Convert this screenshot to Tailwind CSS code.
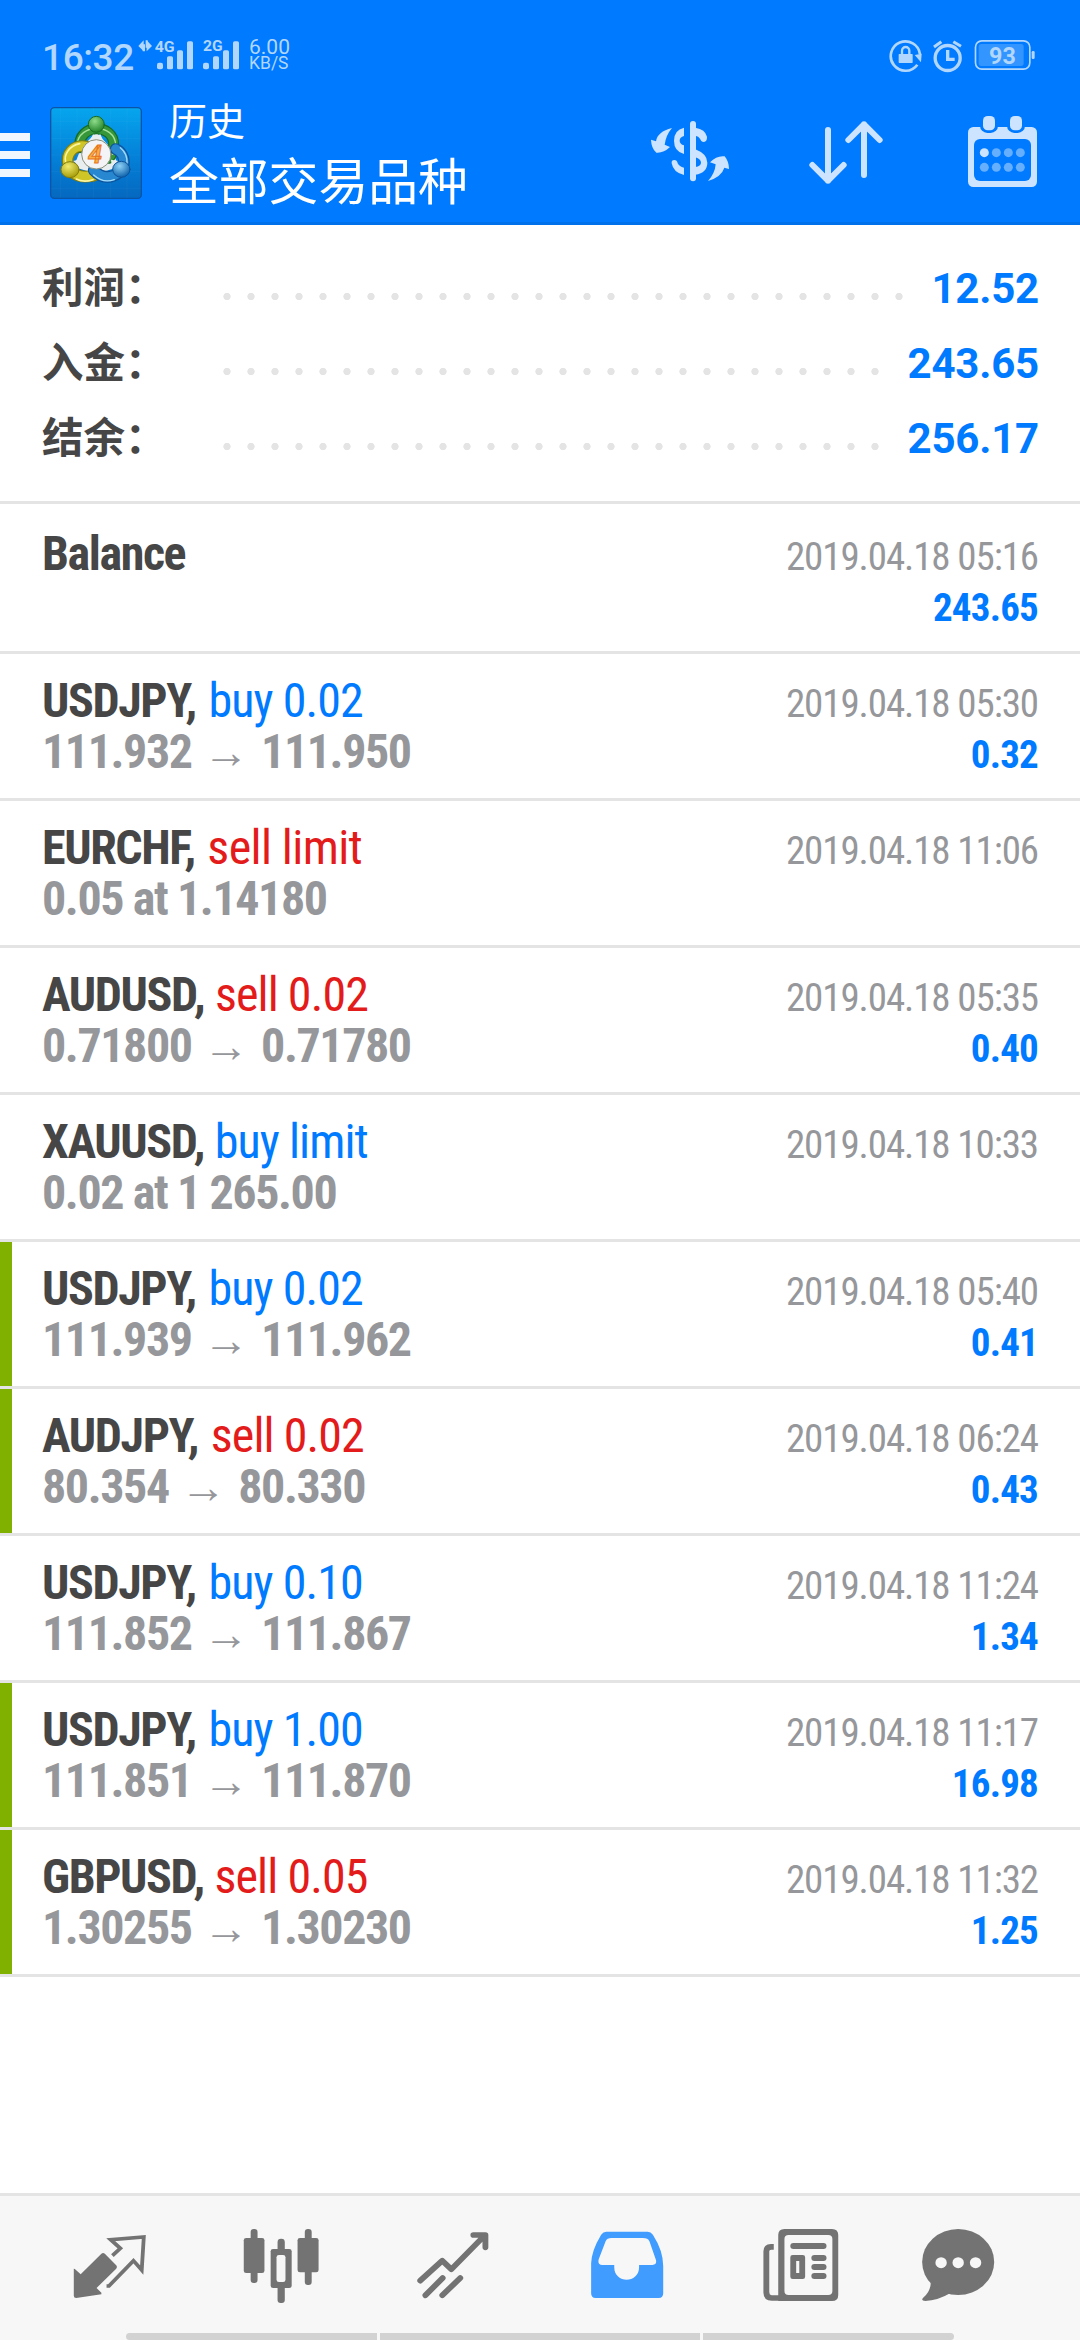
<!DOCTYPE html>
<html lang="zh-CN">
<head>
<meta charset="utf-8">
<title>历史</title>
<script src="https://cdn.jsdelivr.net/npm/@tailwindcss/browser@4"></script>
</head>
<body class="bg-white">
<div class="flex h-[2340px] w-[1080px] flex-col overflow-hidden bg-white font-['Roboto','Noto_Sans_CJK_SC',sans-serif]">

  <header class="h-[225px] shrink-0 border-b-[3px] border-[#0071eb] bg-[#007aff]">
    <!-- status bar -->
    <div class="flex h-[84px] items-start text-[#b2d7ff]">
      <span class="ml-[42px] mt-[36px] w-[96px] text-[37px] font-medium leading-[43px] tracking-[-0.4px]">16:32</span>
      <svg class="mt-[38.5px] h-8 w-[103px]" viewBox="414 56 309 96" fill="#b2d7ff">
        <path d="M431 60V93L415 77ZM440 60V93L456 77Z"/>
        <path d="M428 72h7v21h-7zM437 60h6v22h-6z"/>
        <text x="464" y="95" font-size="42" font-weight="700" textLength="60" lengthAdjust="spacingAndGlyphs">4G</text>
        <text x="609" y="93" font-size="42" font-weight="700" textLength="59" lengthAdjust="spacingAndGlyphs">2G</text>
        <rect x="471" y="127" width="18" height="20" rx="6"/><rect x="501" y="108" width="18" height="39" rx="5"/><rect x="531" y="90" width="18" height="57" rx="5"/><rect x="561" y="63" width="18" height="84" rx="5"/>
        <rect x="609" y="127" width="18" height="20" rx="6"/><rect x="639" y="108" width="18" height="39" rx="5"/><rect x="669" y="90" width="18" height="57" rx="5"/><rect x="699" y="63" width="18" height="84" rx="5"/>
      </svg>
      <div class="ml-[8px] mt-[40px] flex flex-col">
        <span class="text-[21px] leading-[15px]">6.00</span>
        <span class="text-[17.5px] leading-[16px]">KB/S</span>
      </div>
      <svg class="ml-auto mr-[44px] mt-[39px] h-[34px] w-[147px]" viewBox="808 57 441 102" fill="none" stroke="#b2d7ff">
        <path d="M893 134A44 44 0 1 1 901 103" stroke-width="8"/>
        <path d="M885 105L906 101L904 127Z" fill="#b2d7ff" stroke="none"/>
        <path d="M847 104V92a11 11 0 0 1 22 0v12" stroke-width="7"/>
        <rect x="837" y="102" width="42" height="27" rx="2" fill="#b2d7ff" stroke="none"/>
        <circle cx="984" cy="114" r="37.5" stroke-width="10"/>
        <path d="M984 90V118H1005" stroke-width="10"/>
        <path d="M943 81L965 65M1001 65L1024 79" stroke-width="9"/>
        <rect x="1067.500" y="62.500" width="163" height="85" rx="19" stroke-width="5"/>
        <rect x="1077" y="72" width="135" height="66" rx="8" fill="#3395ff" stroke="none"/>
        <rect x="1236" y="93" width="9" height="24" rx="4" fill="#b2d7ff" stroke="none"/>
        <text x="1108" y="132" font-size="70" font-weight="700" fill="#b2d7ff" stroke="none">93</text>
      </svg>
    </div>

    <!-- toolbar -->
    <div class="flex items-start">
      <div class="mt-[49px] flex w-[30px] flex-col gap-[10px]">
        <div class="h-2 bg-[#f0f7ff]"></div><div class="h-2 bg-[#f0f7ff]"></div><div class="h-2 bg-[#f0f7ff]"></div>
      </div>
      <svg class="ml-[19px] mt-[22px] h-[94px] w-[94px]" viewBox="26 33 282 282" fill="none" stroke-linecap="round">
        <defs>
          <linearGradient id="sq" x1="0" y1="0" x2="0" y2="1"><stop offset="0" stop-color="#06a6ee"/><stop offset=".55" stop-color="#0480d8"/><stop offset="1" stop-color="#0568bf"/></linearGradient>
          <radialGradient id="gh" cx=".4" cy=".3" r=".7"><stop offset="0" stop-color="#8fdc8a"/><stop offset="1" stop-color="#23842a"/></radialGradient>
          <radialGradient id="yh" cx=".4" cy=".3" r=".7"><stop offset="0" stop-color="#f2ec6e"/><stop offset="1" stop-color="#a69c0a"/></radialGradient>
          <radialGradient id="bh" cx=".4" cy=".3" r=".7"><stop offset="0" stop-color="#8fd2f7"/><stop offset="1" stop-color="#0f64ad"/></radialGradient>
        </defs>
        <rect x="31" y="38" width="272" height="272" rx="11" fill="url(#sq)" stroke="#0a54a6" stroke-width="4"/>
        <path d="M60 40V308M110 40V308M160 40V308M210 40V308M260 40V308M33 80H301M33 130H301M33 180H301M33 230H301M33 280H301" stroke="#fff" stroke-opacity=".06" stroke-width="2"/>
        <path d="M122 160L168 112L212 160L236 216L168 236L100 216Z" fill="#e8eef0"/>
        <path d="M118 158C112 84 222 84 220 150Q219 172 206 190" stroke="#176a22" stroke-width="33"/>
        <path d="M118 158C112 84 222 84 220 150Q219 172 206 190" stroke="#35973a" stroke-width="26"/>
        <path d="M110 150C114 84 224 84 226 150Q226 168 217 178" stroke="#a5e09b" stroke-width="4"/>
        <path d="M136 154C100 148 74 176 84 212Q100 254 160 242" stroke="#857d0c" stroke-width="35"/>
        <path d="M136 154C100 148 74 176 84 212Q100 254 160 242" stroke="#cfc526" stroke-width="28"/>
        <path d="M118 146C86 152 70 180 76 200M108 252Q130 264 158 254" stroke="#fbf5a0" stroke-width="5"/>
        <path d="M226 162C260 178 260 226 220 242Q186 254 160 226" stroke="#0d529a" stroke-width="35"/>
        <path d="M226 162C260 178 260 226 220 242Q186 254 160 226" stroke="#2787d0" stroke-width="28"/>
        <path d="M240 158Q262 176 260 206M222 254Q188 266 160 240" stroke="#a2dcfa" stroke-width="4"/>
        <path d="M158 118Q168 126 180 118L190 140H148ZM98 198L124 192L122 214ZM234 198L212 194L214 214Z" fill="#e8eef0"/>
        <circle cx="168" cy="88" r="24" fill="url(#gh)" stroke="#176a22" stroke-width="3"/>
        <ellipse cx="89" cy="224" rx="27" ry="24" fill="url(#yh)" stroke="#857d0c" stroke-width="3"/>
        <ellipse cx="243" cy="223" rx="26" ry="24" fill="url(#bh)" stroke="#0d529a" stroke-width="3"/>
        <circle cx="168" cy="178" r="44" fill="#f4f4f6" stroke="#8a8f7a" stroke-width="3"/>
        <text x="143" y="204" font-size="78" font-weight="700" font-style="italic" fill="#f5b04a" stroke="#e8731c" stroke-width="3" textLength="42" lengthAdjust="spacingAndGlyphs">4</text>
      </svg>
      <div class="ml-[26px] mt-[11px] flex flex-col font-['Noto_Sans_CJK_SC',sans-serif] text-white">
        <span class="text-[38px] leading-[48px]">历史</span>
        <span class="mt-[2px] text-[49.8px] leading-[66px]">全部交易品种</span>
      </div>
      <svg class="ml-auto mt-[36px] h-[62px] w-[80px]" viewBox="90 300 240 186" fill="#cce4ff">
        <rect x="210" y="303" width="18" height="181" rx="9"/>
        <path d="M192 323Q162 330 162 362Q162 394 192 402V376Q179 372 179 362Q179 352 192 348Z"/>
        <path d="M226 323Q256 328 261 350Q262 366 249 366Q244 366 240 356Q236 349 226 347Z"/>
        <path d="M226 388Q262 402 262 428Q262 458 226 464V441Q243 438 243 428Q243 418 226 412Z"/>
        <path d="M192 465Q160 458 155 430Q154 420 163 420Q171 420 173 430Q178 440 192 443Z"/>
        <path d="M156 324Q112 335 108 364L93 359Q94 385 109 398Q130 400 150 381L134 374Q138 345 156 324Z"/>
        <path d="M264 483Q305 470 313 443L327 447Q327 425 314 409Q290 406 270 427L287 433Q285 460 264 483Z"/>
      </svg>
      <svg class="ml-[79px] mt-[36px] h-[65px] w-[74px]" viewBox="567 300 222 195" fill="none" stroke="#cce4ff" stroke-width="18" stroke-linecap="round" stroke-linejoin="round">
        <path d="M624 330V482M577 435L624 482L671 435M732 465V313M685 360L732 313L779 360"/>
      </svg>
      <svg class="ml-[85px] mr-[43px] mt-[32px] h-[71px] w-[69px]" viewBox="1044 288 207 213" fill="#cce4ff">
        <rect x="1044" y="321" width="207" height="180" rx="16"/>
        <rect x="1062" y="357" width="171" height="126" rx="18" fill="#007aff"/>
        <rect x="1080" y="279" width="54" height="60" rx="22" fill="#007aff"/><rect x="1161" y="279" width="54" height="60" rx="22" fill="#007aff"/>
        <rect x="1089" y="288" width="36" height="43" rx="14"/><rect x="1170" y="288" width="36" height="43" rx="14"/>
        <circle cx="1093" cy="398" r="13.500"/>
        <g fill="#66afff"><circle cx="1129" cy="398" r="13.500"/><circle cx="1165" cy="398" r="13.500"/><circle cx="1201" cy="398" r="13.500"/><circle cx="1093" cy="442" r="13.500"/><circle cx="1129" cy="442" r="13.500"/><circle cx="1165" cy="442" r="13.500"/><circle cx="1201" cy="442" r="13.500"/></g>
      </svg>
    </div>
  </header>

  <!-- account totals -->
  <section id="totals" class="h-[279px] shrink-0 border-b-[3px] border-[#e4e4e4] pl-[42px] pr-[41px] pt-[23px]"></section>

  <!-- history list -->
  <main id="deals" class="flex-1"></main>

  <nav class="flex h-[147px] shrink-0 flex-col border-t-[3px] border-[#e4e4e4] bg-[#f7f7f7]">
    <div class="flex h-[137px] items-start pl-[70px] pt-[29px] text-[#737373]">
      <svg class="size-20" viewBox="204 135 232 240" preserveAspectRatio="none" fill="currentColor">
        <path d="M215 266L218 267L235 283L295 221Q300 217 305 221L338 256Q342 261 338 266L281 324L295 338V343L222 354Q215 354 215 347Z"/>
        <path d="M327 227L350 205L322 179L418 171L412 270L388 242L317 318H310" fill="none" stroke="currentColor" stroke-width="11"/>
      </svg>
      <svg class="ml-[91px] size-20" viewBox="701 135 232 240" preserveAspectRatio="none" fill="currentColor">
        <rect x="709" y="174" width="60" height="105" rx="7"/><rect x="729" y="147" width="20" height="162" rx="9"/>
        <rect x="865" y="174" width="61" height="103" rx="7"/><rect x="886" y="147" width="20" height="168" rx="9"/>
        <rect x="807" y="176" width="21" height="60" rx="10"/><rect x="807" y="310" width="21" height="59" rx="9"/>
        <rect x="787" y="207" width="61" height="117" rx="7"/><rect x="804" y="225" width="26" height="81" rx="7" fill="#f7f7f7"/>
      </svg>
      <svg class="ml-[92px] size-20" viewBox="1201 135 232 240" preserveAspectRatio="none" fill="none" stroke="currentColor" stroke-width="17" stroke-linecap="round" stroke-linejoin="round">
        <path d="M1222 302L1286 242L1312 268L1409 166M1376 165H1411V202M1237 346L1287 294M1286 346L1338 294"/>
      </svg>
      <svg class="ml-[94px] size-20 text-[#409cff]" viewBox="136 135 232 240" preserveAspectRatio="none" fill="currentColor">
        <path fill-rule="evenodd" d="M192 155H312Q321 155 327 164Q357 212 357 258V340Q357 354 344 354H161Q148 354 148 340V250Q149 212 177 164Q183 155 192 155ZM207 174Q194 174 190 184L170 238Q166 255 180 255H215V262C215 312 287 312 287 262V255H326Q339 254 336 240L317 184Q313 174 298 174Z"/>
      </svg>
      <svg class="ml-[94px] size-20" viewBox="641 135 232 240" preserveAspectRatio="none" fill="currentColor">
        <path fill-rule="evenodd" d="M709 147H847Q865 147 865 165V345Q865 363 847 363H691V165Q691 147 709 147ZM721 165Q709 165 709 177V333Q709 345 721 345H836Q848 345 848 333V177Q848 165 836 165Z"/>
        <path d="M678 200.500H670Q656.500 201 656.500 214V338Q657 354 672 354H694" fill="none" stroke="currentColor" stroke-width="17"/>
        <rect x="726" y="189" width="105" height="18" rx="9"/>
        <path fill-rule="evenodd" d="M733 225H762Q769 225 769 232V290Q769 297 762 297H733Q726 297 726 290V232Q726 225 733 225ZM743 243V279H752V243Z"/>
        <rect x="787" y="225" width="44" height="18" rx="9"/><rect x="787" y="252" width="44" height="18" rx="9"/><rect x="787" y="279" width="44" height="18" rx="9"/>
      </svg>
      <svg class="ml-[77px] size-20" viewBox="1097 135 232 240" preserveAspectRatio="none" fill="currentColor">
        <ellipse cx="1213.500" cy="246" rx="104.500" ry="99"/>
        <path d="M1134 308Q1133 336 1112 353Q1104 362 1118 363Q1154 362 1190 340Z"/>
        <g fill="#f7f7f7"><circle cx="1164" cy="248" r="16.500"/><circle cx="1213.500" cy="248" r="16.500"/><circle cx="1264" cy="248" r="16.500"/></g>
      </svg>
    </div>
    <div class="flex h-[7px] gap-[3px] pl-[126px]">
      <div class="w-[251px] rounded-l-[4px] bg-[#d2d2d2]"></div>
      <div class="w-[320px] bg-[#d2d2d2]"></div>
      <div class="w-[251px] rounded-r-[4px] bg-[#d2d2d2]"></div>
    </div>
  </nav>
</div>

<script>
const totals = [['利润：', '12.52', 29], ['入金：', '243.65', 28], ['结余：', '256.17', 28]];
document.getElementById('totals').innerHTML = totals.map(([label, value, dots]) => `
  <div class="flex h-[75px] items-baseline leading-[75px]">
    <span class="w-[173px] font-['Noto_Sans_CJK_SC',sans-serif] text-[41.5px] font-bold text-[#464646]">${label}</span>
    <span class="h-[7px] self-start mt-[45px] bg-[radial-gradient(circle,#e4e4e4_3.3px,transparent_4px)] bg-[length:24px_7px]" style="width:${dots * 24}px"></span>
    <span class="ml-auto text-[42px] font-bold tracking-[-0.2px] text-[#007aff]">${value}</span>
  </div>`).join('');

const deals = [
  ['Balance', '', '', '2019.04.18 05:16', '243.65', 0],
  ['USDJPY,', 'buy 0.02', '111.932|111.950', '2019.04.18 05:30', '0.32', 0],
  ['EURCHF,', 'sell limit', '0.05 at 1.14180', '2019.04.18 11:06', '', 0],
  ['AUDUSD,', 'sell 0.02', '0.71800|0.71780', '2019.04.18 05:35', '0.40', 0],
  ['XAUUSD,', 'buy limit', '0.02 at 1 265.00', '2019.04.18 10:33', '', 0],
  ['USDJPY,', 'buy 0.02', '111.939|111.962', '2019.04.18 05:40', '0.41', 1],
  ['AUDJPY,', 'sell 0.02', '80.354|80.330', '2019.04.18 06:24', '0.43', 1],
  ['USDJPY,', 'buy 0.10', '111.852|111.867', '2019.04.18 11:24', '1.34', 0],
  ['USDJPY,', 'buy 1.00', '111.851|111.870', '2019.04.18 11:17', '16.98', 1],
  ['GBPUSD,', 'sell 0.05', '1.30255|1.30230', '2019.04.18 11:32', '1.25', 1],
];
const arrow = `<span class="inline-flex w-[50px] justify-center font-['Liberation_Sans'] text-[46px] font-bold tracking-normal">→</span>`;
document.getElementById('deals').innerHTML = deals.map(([symbol, order, price, time, profit, mark], i) => `
  <div class="flex ${i ? 'h-[147px]' : 'h-[150px] pt-[3px]'} justify-between border-b-[3px] border-[#e4e4e4] font-['Roboto_Condensed','Roboto',sans-serif] leading-[51px]">
    <div class="flex">
      <div class="w-3 ${mark ? 'bg-[#80b000]' : ''}"></div>
      <div class="flex flex-col whitespace-nowrap pl-[30px] pt-[21px] text-[48px]">
        <div class="tracking-[-1.4px] text-[#464646]"><span class="font-bold ${/[YF],/.test(symbol) ? 'mr-[3px]' : 'mr-px'}">${symbol}</span> <span class="${order === 'sell limit' ? 'tracking-[-0.6px]' : 'tracking-[-0.9px]'} ${order.startsWith('sell') ? 'text-[#e31b1b]' : 'text-[#007aff]'}">${order}</span></div>
        <div class="h-[51px] font-bold tracking-[-1.4px] text-[#96979b]">${price.replace('|', ' ' + arrow + ' ')}</div>
      </div>
    </div>
    <div class="flex flex-col items-end pr-[42px] pt-[25px] text-[39px]">
      <span class="tracking-[-1.1px] text-[#96979b]">${time}</span>
      <span class="font-bold tracking-[-0.8px] text-[#007aff]">${profit}</span>
    </div>
  </div>`).join('');
</script>
</body>
</html>
